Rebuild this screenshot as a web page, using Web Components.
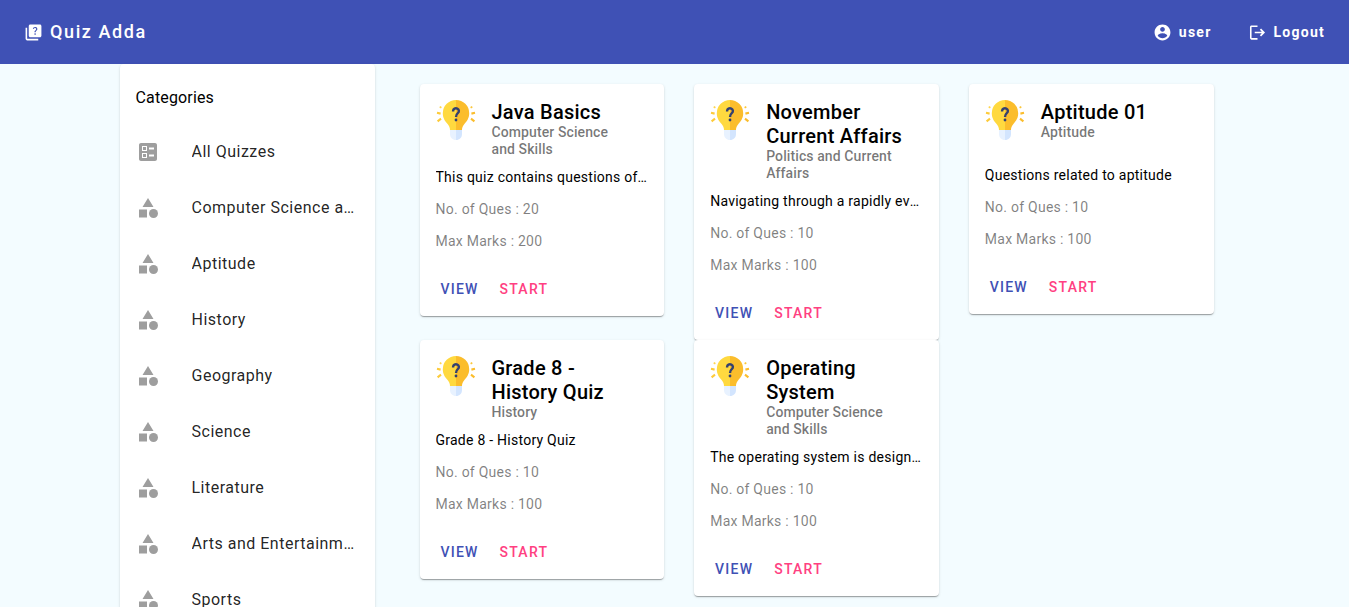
<!DOCTYPE html>
<html lang="en">
<head>
<meta charset="utf-8">
<meta name="viewport" content="width=device-width, initial-scale=1">
<title>Quiz Adda</title>
<style>
  body {
    margin: 0;
    background: #f3fcff;
    color: #000;
    font-family: Roboto, "Liberation Sans", sans-serif;
    font-size: 14px;
    --primary: #3f51b5;
    --accent: #ff4081;
    --surface: #fff;
    --muted: rgba(0, 0, 0, .54);
    --shadow: 0 2px 1px -1px rgba(0, 0, 0, .2), 0 1px 1px 0 rgba(0, 0, 0, .14), 0 1px 3px 0 rgba(0, 0, 0, .12);
    --track-list: .03125em;
    --track-body: .0178571em;
    --track-subtitle: .0071428em;
    --track-button: .0892857em;
  }
</style>
</head>
<body>
<quiz-app></quiz-app>

<script>
const define = (name, html, setup) => {
  const template = document.createElement('template');
  template.innerHTML = html;
  customElements.define(name, class extends HTMLElement {
    connectedCallback() {
      if (this.shadowRoot) return;
      const root = this.attachShadow({ mode: 'open' });
      root.append(template.content.cloneNode(true));
      if (setup) setup(this, root);
    }
  });
};

const ICONS = {
  quiz: '<path d="M4 6H2v14c0 1.1.9 2 2 2h14v-2H4z"/><path fill-rule="evenodd" d="M20 2H8c-1.1 0-2 .9-2 2v12c0 1.1.9 2 2 2h12c1.1 0 2-.9 2-2V4c0-1.1-.9-2-2-2zM14.01 15c-.59 0-1.05-.47-1.05-1.05 0-.59.47-1.04 1.05-1.04.59 0 1.04.45 1.04 1.04-.01.58-.45 1.05-1.04 1.05zM16.51 8.83c-.63.93-1.23 1.21-1.56 1.81-.13.24-.18.4-.18 1.18h-1.52c0-.41-.06-1.08.26-1.65.41-.73 1.18-1.16 1.63-1.8.48-.68.21-1.94-1.14-1.94-.88 0-1.32.67-1.5 1.23l-1.37-.57C11.51 5.96 12.52 5 13.99 5c1.23 0 2.08.56 2.51 1.26.37.61.58 1.73.01 2.57z"/>',
  account: '<path fill-rule="evenodd" d="M12 2C6.48 2 2 6.48 2 12s4.48 10 10 10 10-4.48 10-10S17.52 2 12 2zm0 3c1.66 0 3 1.34 3 3s-1.34 3-3 3-3-1.34-3-3 1.34-3 3-3zm0 14.2c-2.5 0-4.71-1.28-6-3.22.03-1.99 4-3.08 6-3.08 1.99 0 5.97 1.09 6 3.08-1.29 1.94-3.5 3.22-6 3.22z"/>',
  logout: '<path d="M16.500 7l-1.500 1.500L17.400 11H8.500v2h8.900l-2.400 2.500 1.500 1.500 5-5zM4.500 5H12V3H4.500c-1.100 0-2 .9-2 2v14c0 1.100.9 2 2 2H12v-2H4.500z"/>',
  ballot: '<path fill-rule="evenodd" d="M13 9.5h5v-2h-5v2zm0 7h5v-2h-5v2zm6 4.5H5c-1.1 0-2-.9-2-2V5c0-1.1.9-2 2-2h14c1.1 0 2 .9 2 2v14c0 1.1-.9 2-2 2zM6 11h5V6H6v5zm1-4h3v3H7V7zM6 18h5v-5H6v5zm1-4h3v3H7v-3z"/>',
  category: '<path d="M12 2l-5.5 9h11zM3 13.5h8v8H3z"/><circle cx="17.5" cy="17.5" r="4.5"/>'
};

define('app-icon', `
  <style>
    :host { display: block; flex: none; width: 24px; height: 24px; }
    svg { display: block; width: 100%; height: 100%; fill: currentColor; }
  </style>
  <svg viewBox="0 0 24 24" aria-hidden="true"></svg>
`, (host, root) => {
  root.querySelector('svg').innerHTML = ICONS[host.getAttribute('name')];
});

define('nav-button', `
  <style>
    :host { display: block; }
    button {
      display: flex; align-items: center; gap: 7px;
      height: 36px; padding: 0 8px; border: 0; border-radius: 4px;
      background: none; color: inherit; cursor: pointer;
      font: 700 14px/20px Roboto, "Liberation Sans", sans-serif;
      letter-spacing: var(--track-button);
    }
    app-icon { width: 19px; height: 19px; }
  </style>
  <button type="button"><app-icon></app-icon><slot></slot></button>
`, (host, root) => {
  const icon = document.createElement('app-icon');
  icon.setAttribute('name', host.getAttribute('icon'));
  root.querySelector('app-icon').replaceWith(icon);
});

define('app-toolbar', `
  <style>
    :host { display: block; }
    header {
      display: flex; align-items: center; justify-content: space-between;
      height: 64px; padding: 0 16px; background: var(--primary); color: #fff;
    }
    a {
      display: flex; align-items: center; gap: 7px; padding: 0 8px;
      color: inherit; text-decoration: none;
      font-size: 18px; line-height: 32px; font-weight: 500; letter-spacing: var(--track-button);
    }
    a app-icon { width: 19px; height: 19px; }
    nav { display: flex; gap: 20px; }
  </style>
  <header>
    <a href="#"><app-icon name="quiz"></app-icon>Quiz Adda</a>
    <nav>
      <nav-button icon="account">user</nav-button>
      <nav-button icon="logout">Logout</nav-button>
    </nav>
  </header>
`);

define('category-item', `
  <style>
    :host { display: block; }
    a {
      display: flex; align-items: center; gap: 32px; height: 56px; padding: 0 16px;
      color: rgba(0, 0, 0, .87); text-decoration: none;
      font-size: 16px; line-height: 24px; letter-spacing: var(--track-list);
    }
    app-icon { color: #9e9e9e; }
    span { min-width: 0; overflow: hidden; text-overflow: ellipsis; white-space: nowrap; }
  </style>
  <a href="#"><app-icon></app-icon><span><slot></slot></span></a>
`, (host, root) => {
  const icon = document.createElement('app-icon');
  icon.setAttribute('name', host.getAttribute('icon') || 'category');
  root.querySelector('app-icon').replaceWith(icon);
});

define('category-list', `
  <style>
    :host {
      display: block; padding: 8px 0; border-radius: 4px;
      background: var(--surface); box-shadow: var(--shadow);
    }
    h3 {
      margin: 0; padding: 14px 16px;
      font-size: 16px; line-height: 24px; font-weight: 400; letter-spacing: .009375em;
    }
  </style>
  <h3>Categories</h3>
  <nav><slot></slot></nav>
`);

define('quiz-bulb', `
  <style>
    :host { display: block; flex: none; width: 40px; height: 40px; }
    svg { display: block; width: 100%; height: 100%; }
  </style>
  <svg viewBox="0 0 40 40" aria-hidden="true">
    <path fill="#ffd93f" d="M20 0A13.2 13.2 0 0 0 6.8 13.2c0 5 2.4 8 4.6 10.6 1.7 2 2.6 3.8 2.6 6.2h6z"/>
    <path fill="#fbbd2c" d="M20 0a13.2 13.2 0 0 1 13.200 13.200c0 5-2.400 8-4.600 10.600-1.700 2-2.600 3.800-2.600 6.200h-6z"/>
    <path fill="#e8f2ff" d="M14 30h6v10c-3.500 0-6-2.500-6-6z"/>
    <path fill="#d3e5fe" d="M20 30h6v4c0 3.500-2.500 6-6 6z"/>
    <g fill="none">
      <path stroke="#ffd54d" stroke-width="1.600" d="M3.700 6.700l1.700 1"/>
      <path stroke="#fdcb3a" stroke-width="2.100" d="M1 12.800l3.600.8M1.600 21.300l3.400-2.600"/>
      <path stroke="#fbc63a" stroke-width="1.600" d="M36.300 6.700l-1.700 1"/>
      <path stroke="#fbbd2c" stroke-width="2.100" d="M39 12.800l-3.600.8M38.400 21.300L35 18.700"/>
      <path stroke="#34406f" stroke-width="2.400" d="M17.100 11.400v-.5a2.900 2.700 0 1 1 4.700 2.200c-1.200.9-1.800 1.700-1.800 4"/>
    </g>
    <circle cx="20" cy="20" r="1.400" fill="#34406f"/>
  </svg>
`);

define('quiz-card', `
  <style>
    :host {
      display: block; border-radius: 4px;
      background: var(--surface); box-shadow: var(--shadow);
    }
    header { display: flex; gap: 16px; padding: 16px 16px 0; }
    quiz-bulb { margin-bottom: 16px; }
    .heading { min-width: 0; padding-right: 16px; }
    h2 { margin: 0; font-size: 20px; line-height: 24px; font-weight: 500; letter-spacing: .0125em; }
    h3 { margin: 0; font-size: 14px; line-height: 17px; font-weight: 500; letter-spacing: var(--track-subtitle); color: var(--muted); }
    .body { display: grid; gap: 10px; padding: 8px 16px 0; }
    p { margin: 0; font-size: 14px; line-height: 22px; letter-spacing: var(--track-body); color: rgba(0, 0, 0, .5); }
    .about { color: #000; overflow: hidden; text-overflow: ellipsis; white-space: nowrap; }
    footer { display: flex; padding: 19px 8px 9px; }
    button {
      min-width: 64px; height: 36px; padding: 0 8px; border: 0; border-radius: 4px;
      background: none; cursor: pointer; text-transform: uppercase;
      font: 500 14px/20px Roboto, "Liberation Sans", sans-serif;
      letter-spacing: var(--track-button);
    }
    .view { color: var(--primary); }
    .start { color: var(--accent); }
  </style>
  <article>
    <header>
      <quiz-bulb></quiz-bulb>
      <div class="heading">
        <h2><slot name="title"></slot></h2>
        <h3><slot name="category"></slot></h3>
      </div>
    </header>
    <div class="body">
      <p class="about"><slot></slot></p>
      <p class="ques"></p>
      <p class="marks"></p>
    </div>
    <footer>
      <button type="button" class="view">View</button>
      <button type="button" class="start">Start</button>
    </footer>
  </article>
`, (host, root) => {
  root.querySelector('.ques').textContent = 'No. of Ques : ' + host.getAttribute('questions');
  root.querySelector('.marks').textContent = 'Max Marks : ' + host.getAttribute('marks');
});

define('quiz-app', `
  <style>
    :host { display: block; }
    main {
      display: grid; grid-template-columns: minmax(0, 1fr) minmax(0, 3fr);
      max-width: 1140px; margin: 0 auto;
    }
    aside { padding: 0 15px; }
    .quizzes {
      display: grid; grid-template-columns: repeat(3, minmax(0, 1fr));
      column-gap: 30px; align-items: start; align-content: start;
      padding: 20px 31px 20px 30px;
    }
  </style>
  <app-toolbar></app-toolbar>
  <main>
    <aside>
      <category-list>
        <category-item icon="ballot">All Quizzes</category-item>
        <category-item>Computer Science and Skills</category-item>
        <category-item>Aptitude</category-item>
        <category-item>History</category-item>
        <category-item>Geography</category-item>
        <category-item>Science</category-item>
        <category-item>Literature</category-item>
        <category-item>Arts and Entertainment</category-item>
        <category-item>Sports</category-item>
      </category-list>
    </aside>
    <section class="quizzes">
      <quiz-card questions="20" marks="200">
        <span slot="title">Java Basics</span><span slot="category">Computer Science and Skills</span>This quiz contains questions of Java
      </quiz-card>
      <quiz-card questions="10" marks="100">
        <span slot="title">November Current Affairs</span><span slot="category">Politics and Current Affairs</span>Navigating through a rapidly evolving world
      </quiz-card>
      <quiz-card questions="10" marks="100">
        <span slot="title">Aptitude 01</span><span slot="category">Aptitude</span>Questions related to aptitude
      </quiz-card>
      <quiz-card questions="10" marks="100">
        <span slot="title">Grade 8 - History Quiz</span><span slot="category">History</span>Grade 8 - History Quiz
      </quiz-card>
      <quiz-card questions="10" marks="100">
        <span slot="title">Operating System</span><span slot="category">Computer Science and Skills</span>The operating system is designed to manage
      </quiz-card>
    </section>
  </main>
`);
</script>
</body>
</html>
